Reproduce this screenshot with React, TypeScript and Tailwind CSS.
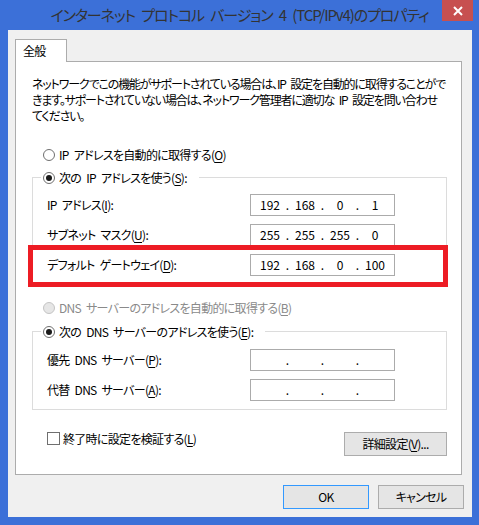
import React from "react";

function Radio({ checked, disabled }: { checked?: boolean; disabled?: boolean }) {
  return (
    <span
      className={`w-[12px] h-[12px] shrink-0 rounded-full border flex items-center justify-center ${
        disabled ? "border-[#c4c4c4] bg-[#e6e6e6]" : "border-[#6f6f6f] bg-white"
      }`}
    >
      {checked && <span className="w-[6px] h-[6px] rounded-full bg-[#1a1a1a]" />}
    </span>
  );
}

function IpBox({ parts }: { parts: string[] }) {
  return (
    <div className="w-[145px] h-[22px] border border-[#ababab] bg-white flex items-center pl-[5px] text-[12px] tracking-normal text-black">
      {parts.map((p, i) => (
        <React.Fragment key={i}>
          <span className="w-[28px] text-center">{p}</span>
          {i < 3 && <span className="w-[7px] text-center">.</span>}
        </React.Fragment>
      ))}
    </div>
  );
}

function Row({ label, parts }: { label: React.ReactNode; parts: string[] }) {
  return (
    <div className="flex items-center h-[22px]">
      <div className="w-[203px] text-[12px] whitespace-nowrap">{label}</div>
      <IpBox parts={parts} />
    </div>
  );
}

function U({ c }: { c: string }) {
  return <span className="underline underline-offset-2">{c}</span>;
}

export default function App() {
  return (
    <div className="w-[479px] h-[525px] bg-[#3c70d8] flex flex-col font-['Noto_Sans_CJK_JP',sans-serif] [font-feature-settings:'palt'] text-black tracking-[-0.7px] [word-spacing:3px]">
      {/* title bar */}
      <div className="h-[30px] relative flex items-center justify-center pt-[1px]">
        <span className="text-[15px] text-[#333333] tracking-[-1.1px] [word-spacing:4px] whitespace-nowrap">
          インターネット プロトコル バージョン 4 (TCP/IPv4)のプロパティ
        </span>
        <div className="absolute right-[6px] top-0 w-[31px] h-[21px] bg-[#c75050] flex items-center justify-center">
          <svg width="10" height="10" viewBox="0 0 10 10">
            <path d="M1 1 L9 9 M9 1 L1 9" stroke="white" strokeWidth="2" />
          </svg>
        </div>
      </div>
      {/* client */}
      <div className="ml-[8px] mr-[7px] mb-[8px] flex-1 bg-[#f0f0f0] flex flex-col pt-[9px] pl-[7px]">
        <div className="relative z-10 w-[52px] h-[23px] border-t border-l border-r border-[#acacac] bg-white pl-[7px] pt-[2px] text-[12px]">
          全般
        </div>
        <div className="relative -mt-px w-[447px] h-[414px] border border-[#acacac] bg-white pl-[16px] pr-[13px] flex flex-col text-[12px]">
          <div className="mt-[14px] leading-[16px] text-[12px] tracking-[-1.15px] whitespace-nowrap">
            ネットワークでこの機能がサポートされている場合は、IP 設定を自動的に取得することがで
            <br />
            きます。サポートされていない場合は、ネットワーク管理者に適切な IP 設定を問い合わせ
            <br />
            てください。
          </div>
          <div className="mt-[22px] h-[17px] flex items-center gap-[4px] pl-[11px] whitespace-nowrap">
            <Radio />
            <span>
              IP アドレスを自動的に取得する(<U c="O" />)
            </span>
          </div>
          <fieldset className="mt-[6px] border border-[#dcdcdc] w-[415px]">
            <legend className="ml-[8px] pl-[2px] pr-[12px]">
              <div className="h-[17px] flex items-center gap-[4px] whitespace-nowrap">
                <Radio checked />
                <span>
                  次の IP アドレスを使う(<U c="S" />):
                </span>
              </div>
            </legend>
            <div className="pl-[14px] pt-[8px] pb-[8px] flex flex-col gap-[8px]">
              <Row label={<>IP アドレス(<U c="I" />):</>} parts={["192", "168", "0", "1"]} />
              <Row label={<>サブネット マスク(<U c="U" />):</>} parts={["255", "255", "255", "0"]} />
              <Row label={<>デフォルト ゲートウェイ(<U c="D" />):</>} parts={["192", "168", "0", "100"]} />
            </div>
          </fieldset>
          <div className="mt-[14px] h-[17px] flex items-center gap-[4px] pl-[11px] text-[#8a8a8a] whitespace-nowrap">
            <Radio disabled />
            <span>
              DNS サーバーのアドレスを自動的に取得する(<U c="B" />)
            </span>
          </div>
          <fieldset className="mt-[7px] border border-[#dcdcdc] w-[415px]">
            <legend className="ml-[8px] pl-[2px] pr-[12px]">
              <div className="h-[17px] flex items-center gap-[4px] whitespace-nowrap">
                <Radio checked />
                <span>
                  次の DNS サーバーのアドレスを使う(<U c="E" />):
                </span>
              </div>
            </legend>
            <div className="pl-[14px] pt-[9px] pb-[8px] flex flex-col gap-[8px]">
              <Row label={<>優先 DNS サーバー(<U c="P" />):</>} parts={["", "", "", ""]} />
              <Row label={<>代替 DNS サーバー(<U c="A" />):</>} parts={["", "", "", ""]} />
            </div>
          </fieldset>
          <div className="mt-[22px] w-[415px] flex items-start justify-between pl-[15px]">
            <div className="h-[13px] flex items-center gap-[3px] whitespace-nowrap">
              <span className="w-[13px] h-[13px] border border-[#6f6f6f] bg-white" />
              <span>
                終了時に設定を検証する(<U c="L" />)
              </span>
            </div>
            <button className="w-[103px] h-[24px] border border-[#acacac] bg-[#e5e5e5] text-[12px] flex items-center justify-center whitespace-nowrap">
              詳細設定(<U c="V" />)...
            </button>
          </div>
          {/* red highlight annotation */}
          <div className="absolute left-[12px] top-[183px] w-[420px] h-[42px] border-[5px] border-[#ed1c24]" />
        </div>
        <div className="mt-[10px] flex justify-end gap-[9px] pr-[8px] text-[12px]">
          <button className="w-[86px] h-[24px] border border-[#3399ff] bg-[#e5e5e5] flex items-center justify-center">
            OK
          </button>
          <button className="w-[86px] h-[24px] border border-[#acacac] bg-[#e5e5e5] flex items-center justify-center">
            キャンセル
          </button>
        </div>
      </div>
    </div>
  );
}
